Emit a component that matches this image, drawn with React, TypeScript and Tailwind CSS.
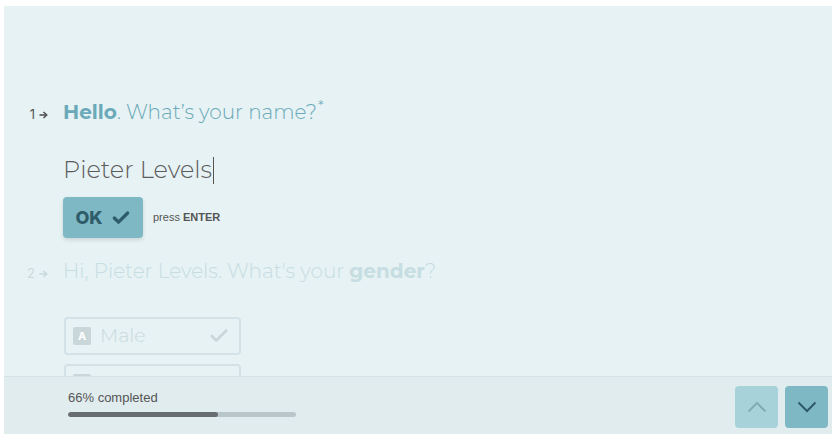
import Check from "lucide-react/dist/esm/icons/check";

const question = "font-['Montserrat','Inter','Noto_Sans',sans-serif]";

const Arrow = ({ className }: { className?: string }) => (
	<svg width="9" height="8" viewBox="0 0 9 8" className={className} fill="none">
		<path d="M0.5 4h6.5" stroke="currentColor" strokeWidth="1.6" />
		<path d="M4.5 1l3.2 3-3.2 3" stroke="currentColor" strokeWidth="1.6" />
	</svg>
);

const Chevron = ({ up }: { up?: boolean }) => (
	<svg width="20" height="12" viewBox="0 0 20 12" fill="none">
		<path
			d={up ? "M1.5 10.5L10 2l8.5 8.5" : "M1.5 1.5L10 10l8.5-8.5"}
			stroke="currentColor"
			strokeWidth="2"
		/>
	</svg>
);

export default function App() {
	return (
		<div className="h-[440px] w-[832px] overflow-hidden bg-white pl-[4px] pt-[6px]">
			<div className="flex h-[428px] flex-col bg-[#e6f2f4]">
				<div className="h-[370px] overflow-hidden pt-[91px]">
					{/* question 1 */}
					<div className="flex items-baseline">
						<div className="flex w-[59px] items-center justify-end gap-[4px] pr-[15px] font-['Inter',sans-serif] text-[13px] text-[#555]">
							<span>1</span>
							<Arrow />
						</div>
						<h2 className={`${question} text-[20px] font-light text-[#6aa9b8]`}>
							<span className="font-bold">Hello</span>. What’s your name?
							<span className="relative -top-[8px] ml-[1px] text-[15px]">*</span>
						</h2>
					</div>

					<div className="pl-[59px]">
						<div className={`${question} mt-[25px] flex items-center text-[24px] font-light text-[#5c5c5c]`}>
							Pieter Levels
							<span className="ml-[1px] inline-block h-[27px] w-px bg-[#555]" />
						</div>

						<div className="mt-[9px] flex items-center gap-[10px]">
							<button className="flex h-[41px] w-[80px] items-center justify-center gap-[8px] rounded-[4px] bg-[#7fb8c5] font-['Inter',sans-serif] text-[18px] font-extrabold text-[#2e5d69] shadow-[0_2px_4px_rgba(0,0,0,0.12)]">
								OK
								<Check size={20} strokeWidth={4} />
							</button>
							<span className="font-['Liberation_Sans',sans-serif] text-[11px] text-[#555]">
								press <span className="font-bold">ENTER</span>
							</span>
						</div>
					</div>

					{/* question 2 */}
					<div className="mt-[18px] flex items-baseline">
						<div className="flex w-[59px] items-center justify-end gap-[4px] pr-[15px] font-['Inter',sans-serif] text-[13px] text-[#c9dadd]">
							<span>2</span>
							<Arrow />
						</div>
						<h2 className={`${question} text-[20px] font-light text-[#c6dde2]`}>
							Hi, Pieter Levels. What's your <span className="font-bold">gender</span>?
						</h2>
					</div>

					<div className="mt-[31px] flex flex-col gap-[9px] pl-[60px]">
						<div className="flex h-[38px] w-[177px] items-center rounded-[4px] border-2 border-[#d2e2e6] px-[7px]">
							<span className="flex h-[18px] w-[18px] items-center justify-center rounded-[2px] bg-[#c9d7db] font-['Inter',sans-serif] text-[11px] font-bold text-white">
								A
							</span>
							<span className={`${question} ml-[9px] flex-1 text-[19px] font-light text-[#c9d9dd]`}>
								Male
							</span>
							<Check size={22} strokeWidth={3} className="mr-[2px] text-[#c9d7db]" />
						</div>
						<div className="flex h-[38px] w-[177px] items-start rounded-[4px] border-2 border-[#d2e2e6] px-[7px] pt-[8px]">
							<span className="h-[18px] w-[18px] rounded-[2px] border-2 border-[#c9d7db]" />
						</div>
					</div>
				</div>

				{/* footer */}
				<div className="flex h-[58px] items-center justify-between border-t border-[#d3e2e5] bg-[#e0ecee] pl-[64px] pr-[4px]">
					<div className="flex flex-col pb-[6px]">
						<span className="font-['Liberation_Sans',sans-serif] text-[13px] text-[#555]">
							66% completed
						</span>
						<div className="mt-[5px] h-[5px] w-[228px] overflow-hidden rounded-full bg-[#bac7ca]">
							<div className="h-full rounded-full bg-[#6a6d6f]" style={{ width: "66%" }} />
						</div>
					</div>
					<div className="flex gap-[7px] pt-[2px]">
						<button className="flex h-[42px] w-[43px] items-center justify-center rounded-[4px] bg-[#a8d2da] text-[#80acb6]">
							<Chevron up />
						</button>
						<button className="flex h-[42px] w-[43px] items-center justify-center rounded-[4px] bg-[#7fb8c5] text-[#2e5a66]">
							<Chevron />
						</button>
					</div>
				</div>
			</div>
		</div>
	);
}
